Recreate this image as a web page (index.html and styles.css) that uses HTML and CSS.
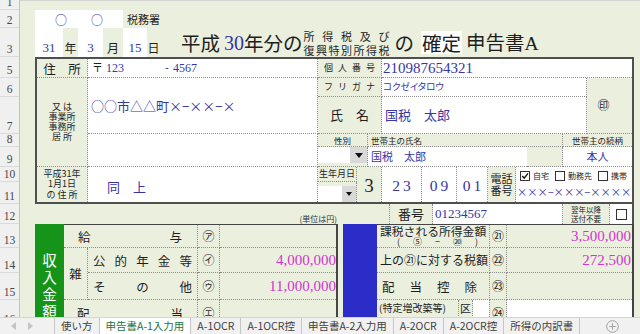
FILE: index.html
```html
<!DOCTYPE html>
<html lang="ja">
<head>
<meta charset="utf-8">
<title>申告書A-1入力用</title>
<link rel="stylesheet" href="styles.css">
</head>
<body>
<div class="app">
  <div class="sheet">
    <div class="rowhdr">
      <div class="rh">1</div><div class="rh">2</div><div class="rh">3</div><div class="rh">5</div><div class="rh">6</div><div class="rh">7</div><div class="rh">8</div><div class="rh">9</div><div class="rh">10</div><div class="rh">11</div><div class="rh">12</div><div class="rh">13</div><div class="rh">14</div><div class="rh">15</div><div class="rh">16</div>
    </div>
    <div class="canvas">
      <div class="r1"></div>
      <div class="top">
        <div class="office-box"><span>○</span><span>○</span></div>
        <div class="office">税務署</div>
        <div class="dcell wh g2 num ink">31</div>
        <div class="dcell g3">年</div>
        <div class="dcell wh g4 num ink">3</div>
        <div class="dcell g5">月</div>
        <div class="dcell wh g6 num ink">15</div>
        <div class="dcell g7">日</div>
        <h1 class="title">
          <span>平成</span><span class="num ink t30">30</span><span>年分の</span>
          <span class="tsmall"><span class="tline">所得税及び</span><span class="tline">復興特別所得税</span></span>
          <span class="tno">の</span><span class="tkind">確定</span><span class="tform">申告書<span class="num">A</span></span>
        </h1>
      </div>

      <div class="main">
        <div class="lb dr db ctr p-juh">住　所</div>
        <div class="wh dr db p-zip"><span class="zmark">〒</span><span class="num ink z1">123</span><span class="zdash">-</span><span class="num ink">4567</span></div>
        <div class="lb dr db ctr spaced p-mnh">個人番号</div>
        <div class="wh db num ink p-mn">210987654321</div>
        <div class="lb dr db ctr p-adh">又 は<br>事業所<br>事務所<br>居 所</div>
        <div class="wh dr db ink p-ad">○○市△△町×−××−×</div>
        <div class="wh dr db p-ad2"></div>
        <div class="lb dr db ctr spaced p-knh">フリガナ</div>
        <div class="wh dr db ink p-kn">コクゼイタロウ</div>
        <div class="lb db ctr p-seal">㊞</div>
        <div class="lb dr db ctr p-nmh">氏　名</div>
        <div class="wh dr db ink p-nm">国税　太郎</div>
        <div class="lb dr db ctr small-lab p-sxh">性別</div>
        <div class="lb dr db small-lab p-hdh">世帯主の氏名</div>
        <div class="lb db ctr small-lab p-rlh">世帯主の続柄</div>
        <div class="lb dr db sel p-sx"><span class="selbox"><span class="btn"></span></span></div>
        <div class="wh db ink p-hd">国税　太郎</div>
        <div class="lb dr db p-fill"></div>
        <div class="wh db ctr ink p-rl">本人</div>
        <div class="lb dr ctr p-jah">平成31年<br>1月1日<br>の 住 所</div>
        <div class="wh dr ink p-ja">同　上</div>
        <div class="lb dr db ctr p-dbh">生年月日</div>
        <div class="lb dr sel sel2 p-db"><span class="selbox"><span class="btn sm"></span></span></div>
        <div class="lb dr ctr num p-era">3</div>
        <div class="wh dr ctr num ink dnum p-yy">23</div>
        <div class="wh dr ctr num ink dnum p-mm">09</div>
        <div class="wh dr ctr num ink dnum p-dd">01</div>
        <div class="lb dr ctr p-telh">電話<br>番号</div>
        <div class="wh p-telo">
          <span class="opt"><span class="box"><svg viewBox="0 0 10 10" width="8" height="8"><path d="M1.5 5 L4 7.8 L8.7 1.8" stroke="#111" stroke-width="1.7" fill="none"/></svg></span>自宅</span>
          <span class="opt"><span class="box"></span>勤務先</span>
          <span class="opt"><span class="box"></span>携帯</span>
        </div>
        <div class="wh ink p-tel">×××−×××−××××</div>
      </div>

      <div class="r12">
        <div class="unit">(単位は円)</div>
        <div class="bango">
          <div class="dr ctr bg-h">番号</div>
          <div class="wh dr num ink bg-v">01234567</div>
          <div class="dr ctr bg-h2">翌年以降<br>送付不要</div>
          <div class="wh ctr bg-cb"><span class="box big"></span></div>
        </div>
      </div>

      <div class="income">
        <div class="green">収入金額</div>
        <div class="ltable">
          <div class="db dr k1"><span>給</span><span>与</span></div>
          <div class="db dr ctr circ c3 r-1">㋐</div>
          <div class="db kval r-1"></div>
          <div class="db dr ctr k-zatsu">雑</div>
          <div class="db dr k-sub r-2"><span>公</span><span>的</span><span>年</span><span>金</span><span>等</span></div>
          <div class="db dr ctr circ c3 r-2">㋑</div>
          <div class="db num mag kval r-2">4,000,000</div>
          <div class="db dr k-sub r-3"><span>そ</span><span>の</span><span>他</span></div>
          <div class="db dr ctr circ c3 r-3">㋒</div>
          <div class="db num mag kval r-3">11,000,000</div>
          <div class="db dr k-haito"><span>配</span><span>当</span></div>
          <div class="db dr ctr circ c3 r-4">㋓</div>
          <div class="db kval r-4"></div>
        </div>
        <div class="blue"></div>
        <div class="rtable">
          <div class="db dr r-lab r-two r-1"><span class="l1">課税される所得金額</span><span class="l2"><span>(</span><span>⑤</span><span>−</span><span>⑳</span><span>)</span></span></div>
          <div class="db dr ctr circ rc2 r-1">㉑</div>
          <div class="db num mag r-val r-1">3,500,000</div>
          <div class="db dr r-lab r-2">上の㉑に対する税額</div>
          <div class="db dr ctr circ rc2 r-2">㉒</div>
          <div class="db num mag r-val r-2">272,500</div>
          <div class="db dr r-lab r-spread r-3"><span>配</span><span>当</span><span>控</span><span>除</span></div>
          <div class="db dr ctr circ rc2 r-3">㉓</div>
          <div class="db r-val r-3"></div>
          <div class="db dr r-lab r-split r-4"><span class="tok">(特定増改築等)</span><span class="ku">区</span><span class="kuv"></span></div>
          <div class="db dr ctr circ rc2 r-4">㉔</div>
          <div class="db wh r-val r-4"></div>
        </div>
      </div>
    </div>
  </div>

  <div class="tabs">
    <div class="nav">
      <svg width="5" height="8" viewBox="0 0 5 8"><path d="M5 0 L0 4 L5 8Z" fill="#c4c4c4"/></svg>
      <svg width="5" height="8" viewBox="0 0 5 8"><path d="M0 0 L5 4 L0 8Z" fill="#c4c4c4"/></svg>
    </div>
    <div class="tab">使い方</div>
    <div class="tab on">申告書A-1入力用</div>
    <div class="tab">A-1OCR</div>
    <div class="tab">A-1OCR控</div>
    <div class="tab">申告書A-2入力用</div>
    <div class="tab">A-2OCR</div>
    <div class="tab">A-2OCR控</div>
    <div class="tab">所得の内訳書</div>
    <div class="add"><svg width="13" height="13" viewBox="0 0 13 13"><circle cx="6.5" cy="6.5" r="5.8" fill="none" stroke="#a0a0a0" stroke-width="1"/><path d="M6.5 3.3v6.4M3.3 6.5h6.4" stroke="#a0a0a0" stroke-width="1"/></svg></div>
  </div>
</div>
</body>
</html>
```
FILE: styles.css
```css
*{box-sizing:border-box;margin:0;padding:0}
html,body{width:640px;height:334px;overflow:hidden}
body{background:#ebefde;color:#1e1e1e;font-family:"Noto Sans CJK JP","Noto Sans",sans-serif;font-size:12px;line-height:1.2}
.app{width:640px;height:334px;display:grid;grid-template-rows:317px 17px}
.sheet{display:flex;align-items:flex-start;overflow:hidden;min-height:0}
.rowhdr{flex:none;width:20px;display:grid;grid-template-rows:10px 18px 29px 21px 19px 37px 13px 20px 15px 22px 20px 24px 25px 27px 27px;background:#f0f0f0;border-right:1px solid #c3c3c3}
.rh{display:flex;align-items:flex-end;justify-content:center;border-bottom:1px solid #dadada;padding-bottom:1px;font-family:"Liberation Serif",serif;font-size:11.5px;line-height:11px;color:#474747}
.canvas{flex:1;min-width:0;display:flex;flex-direction:column}
.r1{height:10px;flex:none;border-top:1px solid #d3d3d3}

.ink{color:#3636a3}
.mag{color:#d035cd}
.num{font-family:"Liberation Serif","Noto Sans CJK JP",serif}
.wh{background:#fff}
.lb{background:#ebefde}
.dr{border-right:1px dotted #8c8c8c}
.db{border-bottom:1px dotted #8c8c8c}
.ctr{display:flex;align-items:center;justify-content:center;text-align:center}

/* top */
.top{height:47px;flex:none;display:grid;grid-template-columns:15px 28px 15px 25px 20px 24px 13px 21px 1fr;grid-template-rows:18px 29px}
.office-box{grid-column:2/6;grid-row:1;background:#fff;display:flex;align-items:flex-end;gap:24px;padding:0 0 2px 20px;color:#3636a3;font-size:12px;line-height:13px}
.office{grid-column:6/9;grid-row:1;display:flex;align-items:flex-end;padding:0 0 2px 4px;font-size:11px;line-height:13px}
.dcell{grid-row:2;display:flex;align-items:flex-end;justify-content:center;padding-bottom:2px;font-size:12px;line-height:14px}
.dcell.num{font-size:13px}
.g2{grid-column:2}.g3{grid-column:3}.g4{grid-column:4}.g5{grid-column:5}.g6{grid-column:6}.g7{grid-column:7}
.title{grid-column:9;grid-row:2;display:flex;align-items:center;font-size:19.5px;font-weight:400;line-height:24px;white-space:nowrap}
.t30{margin-left:4px;font-size:20px}
.tsmall{display:flex;flex-direction:column;width:86px;margin-left:1px;font-size:11px;line-height:14px}
.tline{text-align:justify;text-align-last:justify}
.tno{margin-left:5px}
.tkind{margin-left:7px;background:#fff;padding:0 1px;line-height:23px}
.tform{margin-left:4px}

/* main box */
.main{margin-left:15px;width:599px;height:147px;flex:none;border:2px solid #4f4f4f;display:grid;grid-template-columns:51px 230px 39px 11px 14px 40px 35px 31px 28px 11px 36px 24px 45px;grid-template-rows:19px 19px 37px 13px 20px 15px 20px}
.spaced{font-size:9px;letter-spacing:5px;padding-left:5px}
.p-juh{grid-column:1;grid-row:1;font-size:12.5px}
.p-zip{grid-column:2;grid-row:1;display:flex;align-items:center;padding-left:4px;font-size:11px}
.zmark{width:14px}
.z1{width:59px}
.zdash{width:8px}
.p-zip .num{font-size:12px}
.p-mnh{grid-column:3/6;grid-row:1}
.p-mn{grid-column:6/14;grid-row:1;display:flex;align-items:center;padding-left:1px;font-size:15px}
.p-adh{grid-column:1;grid-row:2/6;font-size:9px;line-height:10px}
.p-ad{grid-column:2;grid-row:2/4;display:flex;align-items:center;padding-left:3px;font-size:13px;white-space:nowrap}
.p-ad2{grid-column:2;grid-row:4/6}
.p-knh{grid-column:3/6;grid-row:2}
.p-kn{grid-column:6/13;grid-row:2;display:flex;align-items:center;padding-left:1px;font-size:9.5px;font-feature-settings:"palt"}
.p-seal{grid-column:13;grid-row:2/4;font-size:12px;padding-right:12px}
.p-nmh{grid-column:3/6;grid-row:3;font-size:13px}
.p-nm{grid-column:6/13;grid-row:3;display:flex;align-items:center;padding-left:3px;font-size:13px}
.small-lab{font-size:8.5px;line-height:10px;white-space:nowrap}
.p-sxh{grid-column:3/5;grid-row:4}
.p-hdh{grid-column:5/12;grid-row:4;display:flex;align-items:center;padding-left:3px}
.p-rlh{grid-column:12/14;grid-row:4}
.p-sx{grid-column:3/5;grid-row:5}
.p-hd{grid-column:5/11;grid-row:5;display:flex;align-items:center;padding-left:3px;font-size:11px}
.p-fill{grid-column:11/12;grid-row:5}
.p-rl{grid-column:12/14;grid-row:5;font-size:11px}
.p-jah{grid-column:1;grid-row:6/8;font-size:9px;line-height:10.5px}
.p-ja{grid-column:2;grid-row:6/8;display:flex;align-items:center;padding:4px 0 0 19px;font-size:13px}
.p-dbh{grid-column:3;grid-row:6;font-size:9px;line-height:10px;white-space:nowrap}
.p-db{grid-column:3;grid-row:7}
.p-era{grid-column:4/6;grid-row:6/8;font-size:19px;padding-top:3px}
.p-yy{grid-column:6;grid-row:6/8}
.p-mm{grid-column:7;grid-row:6/8}
.p-dd{grid-column:8;grid-row:6/8}
.dnum{font-size:15.5px;letter-spacing:3px;padding:3px 0 0 3px}
.p-telh{grid-column:9;grid-row:6/8;font-size:11px;line-height:11.5px}
.p-telo{grid-column:10/14;grid-row:6;display:flex;align-items:center;padding:3px 0 0 4px;font-size:8px;line-height:10px;white-space:nowrap}
.opt{display:flex;align-items:center;gap:3px;margin-right:6px;white-space:nowrap;flex:none}
.box{width:10px;height:10px;flex:none;border:1px solid #333;background:#fff;display:flex;align-items:center;justify-content:center}
.box.big{width:11px;height:11px}
.p-tel{grid-column:10/14;grid-row:7;display:flex;align-items:center;padding-left:1px;font-size:10.3px;white-space:nowrap}

.sel{display:flex;padding-bottom:3px}
.sel2{padding:4px 0 0 0}
.selbox{flex:1;background:#fff;display:flex;justify-content:flex-end}
.btn{width:17px;background:#d9d9d9;display:flex;align-items:center;justify-content:center}
.btn::after{content:"";border-left:4.5px solid transparent;border-right:4.5px solid transparent;border-top:5px solid #111}
.btn.sm{width:14px}
.btn.sm::after{border-left-width:3.5px;border-right-width:3.5px;border-top-width:4px}

/* row 12 */
.r12{height:20px;flex:none;display:flex}
.unit{width:318px;display:flex;align-items:flex-end;justify-content:flex-end;padding:0 1px 0 0;font-size:8px;line-height:10px;color:#333}
.bango{margin-left:51px;width:245px;display:flex;border-left:1px dotted #8c8c8c;border-right:2px solid #4f4f4f}
.bg-h{width:43px;font-size:13px}
.bg-v{width:130px;display:flex;align-items:center;padding-left:2px;font-size:13px}
.bg-h2{width:47px;font-size:7.5px;line-height:9px}
.bg-cb{flex:1}

/* income */
.income{height:103px;flex:none;display:flex;margin-left:15px}
.green{width:29px;flex:none;background:#16941a;color:#fff;writing-mode:vertical-rl;text-orientation:upright;font-size:14.5px;letter-spacing:2.5px;line-height:29px;padding-top:29px}
.ltable{width:274px;flex:none;display:grid;grid-template-columns:24px 110px 22px 116px;grid-template-rows:23px 25px 27px 27px;border-top:1px solid #454545;border-right:2px solid #454545}
.blue{width:34px;flex:none;margin-left:5px;background:#2c2cc9}
.rtable{width:257px;flex:none;display:grid;grid-template-columns:113px 17px 125px;grid-template-rows:23px 25px 27px 27px;border-top:1px solid #454545;border-right:2px solid #454545}
.r-1{grid-row:1}.r-2{grid-row:2}.r-3{grid-row:3}.r-4{grid-row:4}
.circ{font-size:12px}
.c3{grid-column:3}
.rc2{grid-column:2}
.k1{grid-column:1/3;grid-row:1;display:flex;align-items:center;justify-content:space-between;padding:0 15px 0 14px;font-size:12.5px}
.kval{grid-column:4;display:flex;align-items:center;justify-content:flex-end;font-size:15px}
.k-zatsu{grid-column:1;grid-row:2/4;font-size:12.5px}
.k-sub{grid-column:2;display:flex;align-items:center;justify-content:space-between;padding:0 5px;font-size:12.5px}
.k-haito{grid-column:1/3;grid-row:4;display:flex;align-items:center;justify-content:space-between;padding:0 14px 0 13px;font-size:12.5px}
.r-lab{grid-column:1;display:flex;align-items:center;padding-left:3px;font-size:12px;white-space:nowrap}
.r-two{flex-direction:column;align-items:flex-start;justify-content:center}
.l1{font-size:11.8px;line-height:12px}
.l2{display:flex;justify-content:space-between;width:81px;margin-left:17px;font-size:9px;line-height:10px}
.r-spread{justify-content:space-between;padding:0 12px 0 5px;font-size:12.5px}
.r-split{padding:0;align-items:stretch}
.tok{width:81px;font-size:10px;line-height:12px;padding:2px 0 0 2px}
.ku{width:15px;border-left:1px dotted #8c8c8c;border-right:1px dotted #8c8c8c;font-size:11px;line-height:12px;text-align:center;padding-top:2px}
.kuv{flex:1;background:#fff}
.r-val{grid-column:3;display:flex;align-items:center;justify-content:flex-end;padding-right:1px;font-size:15px}

/* tabs */
.tabs{display:flex;background:#f1f1f1;border-top:1px solid #d4d4d4;font-size:10.5px;line-height:16px;color:#3f3f3f;white-space:nowrap}
.nav{width:55px;flex:none;display:flex;align-items:center;gap:12px;padding-left:11px;border-right:1px solid #c6c6c6}
.tab{padding:0 6px;border-right:1px solid #c6c6c6}
.tab.on{background:#fff;color:#217346}
.add{margin-left:26px;display:flex;align-items:center}
```
